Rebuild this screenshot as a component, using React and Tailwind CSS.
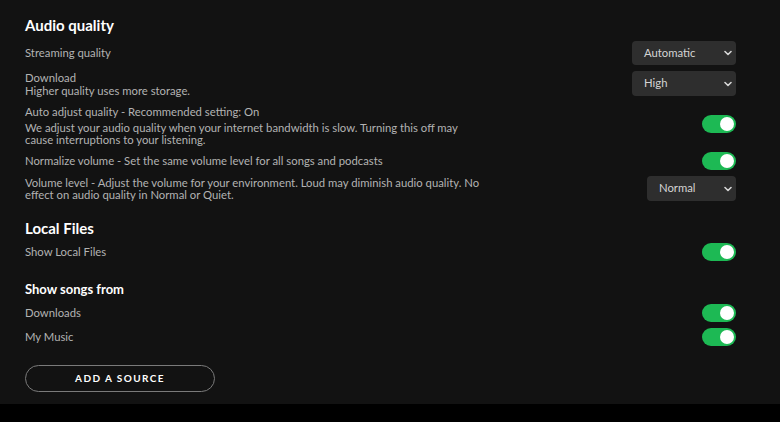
import React from "react";

const font = { fontFamily: "Lato, 'Noto Sans', sans-serif" };

function Chevron() {
  return (
    <svg width="8" height="6" viewBox="0 0 8 6" className="shrink-0">
      <path d="M1 1.5 L4 4.5 L7 1.5" fill="none" stroke="#d6d6d6" strokeWidth="1.6" strokeLinecap="round" strokeLinejoin="round" />
    </svg>
  );
}

function Select({ value, width, height = "h-[24px]" }) {
  return (
    <div className={`flex items-center justify-between pl-[12px] pr-[4px] rounded-[4px] bg-[#2e2e2e] text-[11.3px] text-[#d4d4d4] ${width} ${height}`}>
      <span>{value}</span>
      <Chevron />
    </div>
  );
}

function Toggle({ className = "" }) {
  return (
    <div className={`flex items-center justify-end w-[34px] h-[18px] px-[2px] rounded-full bg-[#1db954] shrink-0 ${className}`}>
      <div className="w-[14px] h-[14px] rounded-full bg-white" />
    </div>
  );
}

export default function App() {
  return (
    <div className="w-[780px] h-[422px] bg-black flex flex-col" style={font}>
      <div className="h-[404px] bg-[#121212] pl-[25px] pr-[44px] pt-[15px] flex flex-col">
        <h2 className="text-[15px] leading-[20px] font-bold text-white">Audio quality</h2>

        <div className="mt-[6px] h-[24px] flex items-center justify-between">
          <span className="text-[11.3px] text-[#b3b3b3]">Streaming quality</span>
          <Select value="Automatic" width="w-[104px]" />
        </div>

        <div className="mt-[6px] h-[25px] flex items-center justify-between">
          <div className="text-[11.3px] leading-[13px] text-[#b3b3b3]">
            <p>Download</p>
            <p>Higher quality uses more storage.</p>
          </div>
          <Select value="High" width="w-[104px]" height="h-[25px]" />
        </div>

        <div className="mt-[10px] flex items-start justify-between">
          <div className="text-[11.3px] leading-[12px] text-[#b3b3b3]">
            <p>Auto adjust quality - Recommended setting: On</p>
            <p className="mt-[4px]">
              We adjust your audio quality when your internet bandwidth is slow. Turning this off may
              <br />
              cause interruptions to your listening.
            </p>
          </div>
          <Toggle className="mt-[9px]" />
        </div>

        <div className="mt-[6px] h-[18px] flex items-center justify-between">
          <span className="text-[11.3px] text-[#b3b3b3]">Normalize volume - Set the same volume level for all songs and podcasts</span>
          <Toggle />
        </div>

        <div className="mt-[6px] h-[25px] flex items-center justify-between">
          <p className="text-[11.3px] leading-[12px] text-[#b3b3b3]">
            Volume level - Adjust the volume for your environment. Loud may diminish audio quality. No
            <br />
            effect on audio quality in Normal or Quiet.
          </p>
          <Select value="Normal" width="w-[89px]" height="h-[25px]" />
        </div>

        <h2 className="mt-[17px] text-[15px] leading-[20px] font-bold text-white">Local Files</h2>

        <div className="mt-[5px] h-[18px] flex items-center justify-between">
          <span className="text-[11.3px] text-[#b3b3b3]">Show Local Files</span>
          <Toggle />
        </div>

        <h3 className="mt-[18px] text-[13px] leading-[20px] font-bold text-white">Show songs from</h3>

        <div className="mt-[5px] h-[18px] flex items-center justify-between">
          <span className="text-[11.3px] text-[#b3b3b3]">Downloads</span>
          <Toggle />
        </div>

        <div className="mt-[6px] h-[18px] flex items-center justify-between">
          <span className="text-[11.3px] text-[#b3b3b3]">My Music</span>
          <Toggle />
        </div>

        <button className="mt-[19px] w-[190px] h-[27px] rounded-full border border-[#7a7a7a] text-[10px] font-bold tracking-[0.14em] text-white">
          ADD A SOURCE
        </button>
      </div>
    </div>
  );
}
